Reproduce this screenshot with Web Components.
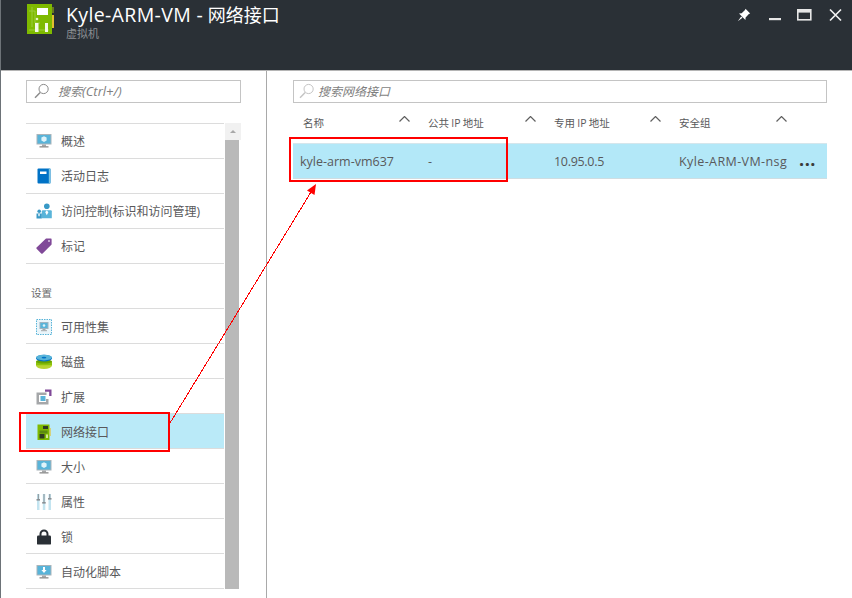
<!DOCTYPE html>
<html lang="zh">
<head>
<meta charset="utf-8">
<title>Kyle-ARM-VM - 网络接口</title>
<style>
    html, body { margin: 0; height: 100%; overflow: hidden; background: #fff; }
    body { font-family: "Open Sans", "Noto Sans CJK SC", sans-serif; }
</style>
</head>
<body>
<blade-app></blade-app>

<script>
/**
 * Inline svg for every icon used on the page, all on a 16x16 box.
 */
const monitor = (inner) => `
    <rect x="0.5" y="1" width="15" height="10.5" fill="#a9b4ba"/>
    <rect x="1.5" y="2" width="13" height="8.5" fill="#59b4d9"/>
    ${inner}
    <rect x="6" y="11.500" width="4" height="2" fill="#a5a7a9"/>
    <rect x="3.5" y="13.2" width="9" height="1.3" fill="#8a8a8a"/>`;

const ICONS = {
    overview: monitor(`<path d="M8 3.2l2.6 1.4v2.8L8 8.900 5.400 7.400V4.600z" fill="#dff3fa"/>`),
    log: `<rect x="1.5" y="0.5" width="13" height="15" rx="1" fill="#0072c6"/>
        <rect x="12.8" y="0.5" width="1.7" height="15" fill="#7cc4e2"/>
        <rect x="4" y="3.5" width="6.5" height="2.5" fill="#fff"/>`,
    access: `<circle cx="10.800" cy="3.200" r="2.800" fill="#3999c6"/>
        <path d="M6.800 7.200h8a1 1 0 0 1 1 1v7h-10v-7a1 1 0 0 1 1-1z" fill="#59b4d9"/>
        <path d="M10.800 7.200l1.600 2-1.600 3-1.600-3z" fill="#fff"/>
        <circle cx="3.200" cy="8.200" r="1.800" fill="#3999c6"/>
        <path d="M0.500 10.500h5.300v5h-5.300z" fill="#3999c6"/>
        <path d="M3 10.800l1 1-1 2-1-2z" fill="#fff"/>`,
    tag: `<path d="M10 0.600h5a.6.6 0 0 1 .6.6v5.400L6.600 15.400a1 1 0 0 1-1.400 0L.6 10.800a1 1 0 0 1 0-1.400z" fill="#804998"/>
        <circle cx="13" cy="3" r="1" fill="#d9c6e2"/>`,
    avail: `<rect x="0.500" y="0.500" width="15" height="15" fill="#eaf5fa" stroke="#59b4d9" stroke-dasharray="1.500 1"/>
        <rect x="3.500" y="3" width="9" height="7" fill="#9fb4c0"/>
        <rect x="4.500" y="4" width="7" height="5" fill="#59b4d9"/>
        <circle cx="8" cy="6.500" r="1.300" fill="#dff3fa"/>
        <rect x="6.500" y="10" width="3" height="1.200" fill="#a5a7a9"/>
        <rect x="5" y="11.200" width="6" height="1" fill="#a5a7a9"/>`,
    disk: `<ellipse cx="8" cy="11.200" rx="8" ry="3.800" fill="#b8d432"/>
        <rect x="0" y="7.500" width="16" height="3.700" fill="#8cc20a"/>
        <ellipse cx="8" cy="7.500" rx="8" ry="2" fill="#68a300"/>
        <ellipse cx="8" cy="4.200" rx="8" ry="3.400" fill="#0072c6"/>
        <ellipse cx="8" cy="3.600" rx="8" ry="2.800" fill="#59b4d9"/>
        <ellipse cx="8" cy="3.600" rx="2.400" ry="0.900" fill="#0072c6"/>`,
    ext: `<path d="M0.500 3.500h10v2.500h-7.500v7h7v-3h2.500v5.500h-12z" fill="#a5a7a9"/>
        <rect x="4.500" y="7" width="5" height="5" fill="#59b4d9"/>
        <path d="M9 0.500h6.500v6.500h-2.300v-4.200h-4.200z" fill="#804998"/>`,
    nic: `<rect x="1.500" y="0.500" width="12" height="15.500" fill="#7fba00"/>
        <rect x="7" y="2" width="5" height="3" fill="#2f3a22"/>
        <rect x="3.500" y="6.500" width="8" height="3" fill="#5c8a10"/>
        <rect x="3.500" y="10" width="5" height="4.500" fill="#2f3a22"/>
        <rect x="10" y="10.500" width="2" height="3.500" fill="#d4e89a"/>
        <rect x="13.500" y="4" width="1.200" height="8" fill="#e2c84a"/>`,
    size: monitor(`<path d="M8 3.200l2.600 1.400v2.800L8 8.900 5.400 7.400V4.600z" fill="#dff3fa"/>`),
    props: `<rect x="1" y="0" width="2.500" height="16" fill="#c3e4f0"/><rect x="6.800" y="0" width="2.500" height="16" fill="#c3e4f0"/><rect x="12.500" y="0" width="2.500" height="16" fill="#c3e4f0"/>
        <g fill="#8a8f93"><rect x="1.800" y="0" width="1" height="5"/><rect x="7.500" y="0" width="1" height="8"/><rect x="13.300" y="0" width="1" height="4"/>
        <rect x="0.500" y="5" width="3.500" height="1.600"/><rect x="6.200" y="8" width="3.500" height="1.600"/><rect x="12" y="4" width="3.500" height="1.600"/></g>`,
    lock: `<path d="M3.500 7V5a4.500 4.500 0 0 1 9 0v2h-2V5a2.500 2.500 0 0 0-5 0v2z" fill="#2a3036"/>
        <rect x="1" y="6.600" width="14" height="9" rx="1.200" fill="#2a3036"/>`,
    script: monitor(`<path d="M7 3h2v3h1.600L8 9 5.400 6H7z" fill="#fff"/>`),
    search: `<circle cx="9.600" cy="6" r="4.600" fill="none" stroke="currentColor"/>
        <path d="M6.200 9.400L1 14.800" fill="none" stroke="currentColor" stroke-width="1.400"/>`
};

const svgIcon = (name) => `<svg viewBox="0 0 16 16" width="16" height="16">${ICONS[name]}</svg>`;

/**
 * Search box used at the top of both blades.
 */
class SearchBox extends HTMLElement {
    constructor() {
        super();
        this.attachShadow({mode: "open"}).innerHTML = `
            <style>
                :host {
                    display: flex;
                    align-items: center;
                    gap: 8px;
                    box-sizing: border-box;
                    height: 23px;
                    padding: 0 0 1px 7px;
                    border: 1px solid #c4c4c4;
                    color: #7f7f7f;
                    font-size: 12px;
                    font-style: italic;
                }
                :host([faint]) { gap: 3px; padding-left: 5px; }
                svg { color: #8a8a8a; flex: none; }
                :host([faint]) svg { color: #c4c4c4; }
            </style>
            ${svgIcon("search")}<span><slot></slot></span>
        `;
    }
}

/**
 * One row of the left menu. The icon comes from the "icon" attribute.
 */
class MenuItem extends HTMLElement {
    constructor() {
        super();
        this.attachShadow({mode: "open"}).innerHTML = `
            <style>
                :host {
                    display: flex;
                    align-items: center;
                    gap: 9px;
                    box-sizing: border-box;
                    height: 35px;
                    padding-left: 10px;
                    padding-top: var(--row-nudge, 0);
                    border-bottom: 1px solid #dcdcdc;
                    color: #59595b;
                    font-size: 12px;
                }
                :host([selected]) { background: #baeaf8; }
                svg { flex: none; }
            </style>
            ${svgIcon(this.getAttribute("icon"))}<slot></slot>
        `;
    }
}

/**
 * Left blade: search, scrolling menu and its scrollbar.
 */
class SideMenu extends HTMLElement {
    constructor() {
        super();
        this.attachShadow({mode: "open"}).innerHTML = `
            <style>
                :host {
                    display: block;
                    box-sizing: border-box;
                    width: 266px;
                    flex: none;
                    padding: 9px 25px 0 25px;
                    border-right: 1px solid #a9a9a9;
                    overflow: hidden;
                }
                .scroller {
                    display: grid;
                    grid-template-columns: 198px 1fr;
                    column-gap: 1px;
                    margin-top: 20px;
                }
                .list { border-top: 1px solid #dcdcdc; }
                .settings { --row-nudge: 1px; }
                .group {
                    box-sizing: border-box;
                    height: 45px;
                    padding: 21px 0 0 5px;
                    border-bottom: 1px solid #dcdcdc;
                    color: #6a6a6a;
                    font-size: 10.5px;
                    line-height: 16px;
                }
                .bar { background: linear-gradient(90deg, #b9b9b9 14px, #fff 14px); }
                .up {
                    display: flex;
                    align-items: center;
                    justify-content: center;
                    height: 17px;
                    background: #f1f1f1;
                }
                .up i {
                    border: 3px solid transparent;
                    border-top: 0;
                    border-bottom: 3px solid #a8a8a8;
                }
                .latin { font-size: 13px; }
            </style>
            <search-box>搜索<span class="latin">(Ctrl+/)</span></search-box>
            <div class="scroller">
                <div class="list">
                    <menu-item icon="overview">概述</menu-item>
                    <menu-item icon="log">活动日志</menu-item>
                    <menu-item icon="access">访问控制(标识和访问管理)</menu-item>
                    <menu-item icon="tag">标记</menu-item>
                    <div class="group">设置</div>
                    <div class="settings">
                        <menu-item icon="avail">可用性集</menu-item>
                        <menu-item icon="disk">磁盘</menu-item>
                        <menu-item icon="ext">扩展</menu-item>
                        <menu-item icon="nic" selected>网络接口</menu-item>
                        <menu-item icon="size">大小</menu-item>
                        <menu-item icon="props">属性</menu-item>
                        <menu-item icon="lock">锁</menu-item>
                        <menu-item icon="script">自动化脚本</menu-item>
                    </div>
                </div>
                <div class="bar"><div class="up"><i></i></div></div>
            </div>
        `;
    }
}

/**
 * Right blade: search and the table of network interfaces.
 */
class NicTable extends HTMLElement {
    constructor() {
        super();
        const columns = ["名称", "公共 IP 地址", "专用 IP 地址", "安全组"];
        const chevron = `<svg width="11" height="6" viewBox="0 0 11 6"><path d="M.5 5.500l5-5 5 5" fill="none" stroke="#5f5f5f" stroke-width="1.200"/></svg>`;

        this.attachShadow({mode: "open"}).innerHTML = `
            <style>
                :host {
                    display: block;
                    flex: 1;
                    padding: 9px 25px 0 26px;
                }
                .grid {
                    display: grid;
                    grid-template-columns: 135px 126px 125px 148px;
                }
                .head {
                    height: 40px;
                    align-items: center;
                    color: #59595b;
                    font-size: 10.5px;
                    word-spacing: -0.5px;
                }
                .head > div {
                    display: flex;
                    justify-content: space-between;
                    align-items: center;
                    padding: 0 18px 0 0;
                    margin-bottom: 2px;
                }
                .head > div:first-child { padding-left: 10px; }
                .head > div:last-child { padding-right: 40px; }
                .head svg { margin-top: -6px; }
                .row {
                    height: 36px;
                    align-items: center;
                    box-sizing: border-box;
                    background: #b3e8f8;
                    border-top: 1px solid #d5e6ec;
                    border-bottom: 1px solid #cfdde2;
                    color: #59595b;
                    font-size: 12.5px;
                }
                .row > :first-child { padding-left: 7px; }
                .ip { letter-spacing: -0.3px; }
                .last { display: flex; justify-content: space-between; padding-right: 11px; }
                .last span:first-child { letter-spacing: 0.4px; }
                .more { font-weight: bold; color: #3a3a3a; font-size: 18px; line-height: 12px; letter-spacing: .5px; }
            </style>
            <search-box faint>搜索网络接口</search-box>
            <div class="grid head">
                ${columns.map((c) => `<div><span>${c}</span>${chevron}</div>`).join("")}
            </div>
            <div class="grid row">
                <div>kyle-arm-vm637</div>
                <div>-</div>
                <div class="ip">10.95.0.5</div>
                <div class="last"><span>Kyle-ARM-VM-nsg</span><span class="more">...</span></div>
            </div>
        `;
    }
}

/**
 * Dark title bar with the resource icon and the window buttons.
 */
class BladeHeader extends HTMLElement {
    constructor() {
        super();
        this.attachShadow({mode: "open"}).innerHTML = `
            <style>
                :host {
                    display: flex;
                    box-sizing: border-box;
                    height: 71px;
                    flex: none;
                    padding: 4px 10px 0 26px;
                    gap: 11px;
                    background: #2a3036;
                    border-bottom: 1px solid #b5b5b5;
                    color: #fff;
                }
                .logo { flex: none; }
                .titles { flex: 1; }
                h1 {
                    margin: 0;
                    font-size: 18px;
                    font-weight: 400;
                    line-height: 22px;
                    white-space: nowrap;
                }
                h1 span { font-size: 19.5px; letter-spacing: .35px; }
                p {
                    margin: 1px 0 0;
                    font-family: "Liberation Sans", "Noto Sans CJK SC", sans-serif;
                    font-size: 11px;
                    line-height: 14px;
                    color: #8a8f93;
                }
                .buttons { display: flex; gap: 16px; padding-top: 4px; align-items: flex-start; }
                .buttons svg:last-child { margin-left: 1px; }
            </style>
            <svg class="logo" width="28" height="30" viewBox="0 0 28 30">
                <rect width="25" height="30" fill="#7fba00"/>
                <path d="M2 7h6v12h5M5 3v20M2 26h20" fill="none" stroke="#9ccc3c"/>
                <rect x="10" y="4" width="11" height="7" fill="#fff"/>
                <circle cx="10" cy="15" r="1.300" fill="#e6f3c4"/>
                <rect x="8" y="19" width="3.500" height="9" fill="#f4f8e6"/>
                <rect x="18" y="19" width="3" height="9" fill="#f4f8e6"/>
                <rect x="25" y="11" width="2" height="13" fill="#e2c030"/>
                <rect x="25" y="3" width="2" height="6" fill="#6a7a20"/>
            </svg>
            <div class="titles">
                <h1><span>Kyle-ARM-VM -</span> 网络接口</h1>
                <p>虚拟机</p>
            </div>
            <div class="buttons">
                <svg width="16" height="14" viewBox="0 0 16 14" fill="#fff"><path d="M8.500 .8l4.700 4.700-1.300.6-3.300 3.300-.2 2.600L2 5.500l2.700-.3L8 2z"/><path d="M.8 13.200l3.400-4.800 1.300 1.300z"/></svg>
                <svg width="12" height="14" viewBox="0 0 12 14" fill="#e6e6e6"><rect x="0" y="10" width="12" height="2.200"/></svg>
                <svg width="15" height="14" viewBox="0 0 15 14"><rect x=".8" y="1.800" width="13" height="10" fill="none" stroke="#e6e6e6" stroke-width="1.600"/><rect x="1" y="2" width="13" height="2.600" fill="#e6e6e6"/></svg>
                <svg width="13" height="14" viewBox="0 0 13 14"><path d="M1 1.500l11 11M12 1.500l-11 11" stroke="#f2f2f2" stroke-width="1.700" fill="none"/></svg>
            </div>
        `;
    }
}

/**
 * Whole page. The red boxes and the arrow are the annotation drawn over the
 * screenshot, so those alone sit on an absolute svg layer.
 */
class BladeApp extends HTMLElement {
    constructor() {
        super();
        this.attachShadow({mode: "open"}).innerHTML = `
            <style>
                :host {
                    position: relative;
                    display: flex;
                    flex-direction: column;
                    box-sizing: border-box;
                    width: 852px;
                    height: 598px;
                    overflow: hidden;
                    border-left: 1px solid #6d7378;
                }
                .body { display: flex; flex: 1; min-height: 0; }
                .notes { position: absolute; left: -1px; top: 0; pointer-events: none; }
            </style>
            <blade-header></blade-header>
            <div class="body">
                <side-menu></side-menu>
                <nic-table></nic-table>
            </div>
            <svg class="notes" width="852" height="598" viewBox="0 0 852 598" fill="none">
                <rect x="20" y="413" width="149" height="38" stroke="#f00" stroke-width="2"/>
                <rect x="290" y="138" width="217" height="43" stroke="#f00" stroke-width="2"/>
                <path d="M170 423L311 192" stroke="#f00" shape-rendering="crispEdges"/>
                <path d="M316 184l-1.500 11-7.500-4.500z" fill="#f00"/>
            </svg>
        `;
    }
}

customElements.define("search-box", SearchBox);
customElements.define("menu-item", MenuItem);
customElements.define("side-menu", SideMenu);
customElements.define("nic-table", NicTable);
customElements.define("blade-header", BladeHeader);
customElements.define("blade-app", BladeApp);
</script>
</body>
</html>
